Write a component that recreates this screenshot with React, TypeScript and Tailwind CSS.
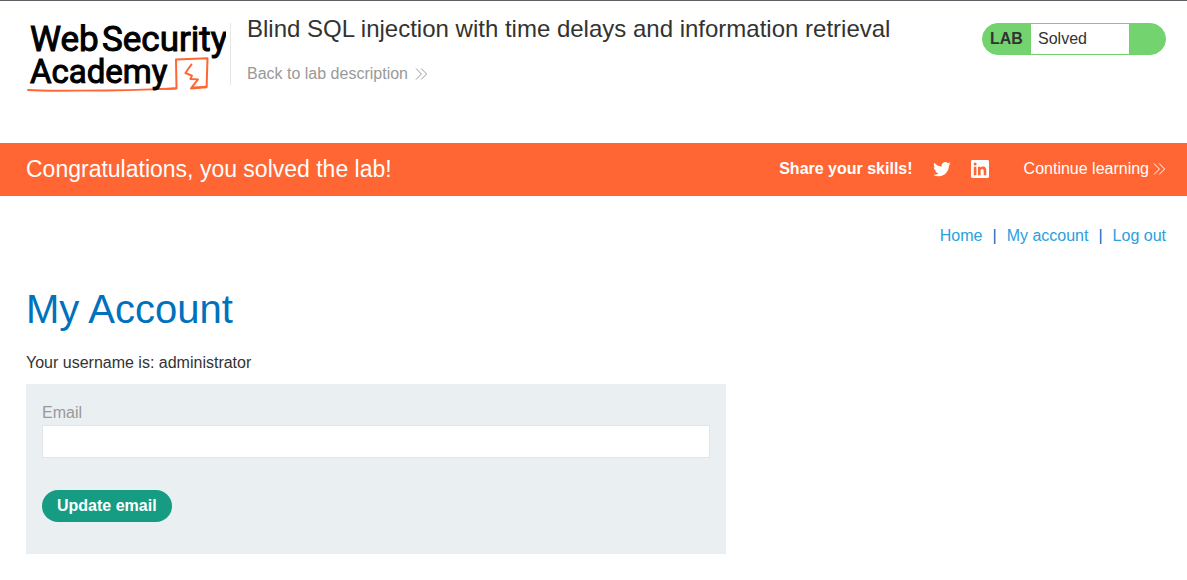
function DoubleChevron({ className }: { className: string }) {
  return (
    <svg viewBox="0 0 13 12" fill="none" stroke="currentColor" strokeWidth="1" className={className} aria-hidden="true">
      <path d="M1 0.5 L6.4 6 L1 11.5 M6.2 0.5 L11.6 6 L6.2 11.5" />
    </svg>
  );
}

function Logo() {
  return (
    <svg viewBox="0 0 200 76" className="h-[76px] w-[200px] shrink-0" role="img" aria-label="Web Security Academy">
      <g fill="none" stroke="#ff6633" strokeLinejoin="round" strokeLinecap="round">
        <path d="M2 73 C20 74.5 45 73.5 80 73.5 S125 72 150 71.5" strokeWidth="1.8" />
        <path d="M140 72 L150.5 71.2 L150 42.4 L181.5 41.2 L180.6 70.2 L165 71.4" strokeWidth="2" />
        <path d="M165.5 47.4 L159.4 56 L166 58.6 L164.4 62 L172 62.4 L165.6 70.6 L180 69.6" strokeWidth="1.9" />
      </g>
      <g fill="#000000" stroke="#000000" strokeWidth="1" fontFamily="Roboto, sans-serif">
        <text x="4" y="34" fontSize="35">Web</text>
        <text x="76" y="34" fontSize="35">Security</text>
        <text x="4" y="66" fontSize="33">Academy</text>
      </g>
    </svg>
  );
}

function TwitterIcon() {
  return (
    <svg viewBox="0 1.5 24 21" fill="currentColor" className="h-4 w-[18px]" aria-hidden="true">
      <path d="M23.6 4.9a9.6 9.6 0 0 1-2.8.8 4.8 4.8 0 0 0 2.1-2.7 9.6 9.6 0 0 1-3 1.2 4.8 4.8 0 0 0-8.2 4.4A13.6 13.6 0 0 1 1.8 3.6a4.8 4.8 0 0 0 1.5 6.4 4.8 4.8 0 0 1-2.2-.6v.1a4.8 4.8 0 0 0 3.8 4.7 4.8 4.8 0 0 1-2.1.1 4.8 4.8 0 0 0 4.5 3.3A9.6 9.6 0 0 1 .2 19.6a13.6 13.6 0 0 0 7.4 2.1c8.8 0 13.6-7.3 13.6-13.6v-.7a9.7 9.7 0 0 0 2.4-2.5z" />
    </svg>
  );
}

function LinkedInIcon() {
  return (
    <svg viewBox="0 0 18 18" fill="none" className="size-[18px]" aria-hidden="true">
      <rect width="18" height="18" rx="1.4" fill="#ffffff" />
      <circle cx="4.1" cy="4.1" r="1.5" fill="#ff6633" />
      <path
        fill="#ff6633"
        d="M2.8 6.8h2.6v8.5H2.8z M7 6.8h2.5V8C9.9 7.2 10.8 6.6 12 6.6c2.6 0 3.3 1.7 3.3 4v4.7h-2.6v-4.2c0-1-.1-2.2-1.4-2.2s-1.7 1-1.7 2.1v4.3H7z"
      />
    </svg>
  );
}

export default function App() {
  return (
    <div className="min-h-screen border-t border-[#5f5f66] bg-white font-['Liberation_Sans',Arial,sans-serif] text-base text-[#333332]">
      <header className="flex items-start pb-[50px] pl-[26px] pr-[21px] pt-4">
        <a href="#academy">
          <Logo />
        </a>
        <div className="ml-1 mt-1.5 h-[62px] border-l border-[#e5e5e5] pl-4">
          <h1 className="-mt-2 text-2xl leading-7">Blind SQL injection with time delays and information retrieval</h1>
          <a href="#description" className="mt-[19px] flex items-center gap-[7px] leading-6 text-[#999999]">
            Back to lab description
            <DoubleChevron className="h-3 w-[13px]" />
          </a>
        </div>
        <div className="ml-auto mt-1.5 flex h-8 w-[184px] overflow-hidden rounded-full border border-[#72d36f] bg-[#72d36f] leading-[30px]">
          <span className="w-12 pl-[7px] font-bold">LAB</span>
          <span className="w-[98px] bg-white pl-[7px]">Solved</span>
        </div>
      </header>

      <section className="flex h-[53px] items-center bg-[#ff6633] pb-0.5 pl-[26px] pr-[21px] text-white">
        <h2 className="text-[23px] leading-8">Congratulations, you solved the lab!</h2>
        <strong className="ml-auto">Share your skills!</strong>
        <a href="#twitter" aria-label="Share on Twitter" className="ml-5">
          <TwitterIcon />
        </a>
        <a href="#linkedin" aria-label="Share on LinkedIn" className="ml-5">
          <LinkedInIcon />
        </a>
        <a href="#learning" className="ml-[35px] flex items-center gap-1">
          Continue learning
          <DoubleChevron className="h-3 w-[13px]" />
        </a>
      </section>

      <main className="pl-[26px] pr-[21px] pt-7">
        <nav className="flex justify-end gap-2.5 text-[#29a0e0]">
          <a href="#home">Home</a>
          <span className="text-[#0071bc]">|</span>
          <a href="#account">My account</a>
          <span className="text-[#0071bc]">|</span>
          <a href="#logout">Log out</a>
        </nav>
        <h2 className="mt-9 text-[40px] leading-[50px] text-[#0071bc]">My Account</h2>
        <p className="mt-4 leading-[26px]">Your username is: administrator</p>
        <form
          className="mt-2 max-w-[700px] bg-[#eaeff2] px-4 pb-8 pt-4"
          onSubmit={(event) => event.preventDefault()}
        >
          <label htmlFor="email" className="block leading-[25px] text-[#999999]">
            Email
          </label>
          <input
            id="email"
            type="email"
            className="block h-[33px] w-full border border-[#e2e4e8] bg-white px-2 outline-none"
          />
          <button type="submit" className="mt-8 block h-8 rounded-full bg-[#159c82] px-[15px] font-bold text-white">
            Update email
          </button>
        </form>
      </main>
    </div>
  );
}
